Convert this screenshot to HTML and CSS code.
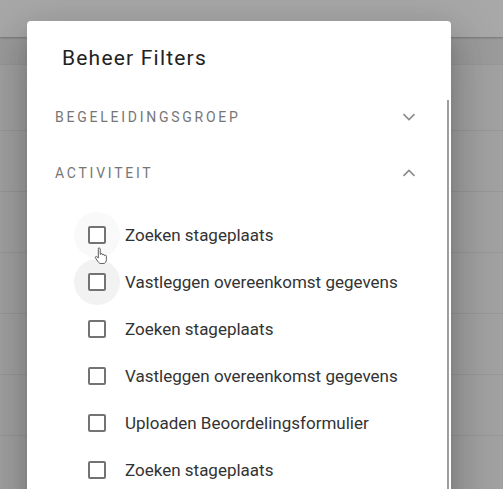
FILE: index.html
```html
<!DOCTYPE html>
<html lang="nl">
<head>
<meta charset="utf-8">
<title>Beheer Filters</title>
<link rel="stylesheet" href="styles.css">
</head>
<body>
<div class="page">
  <div class="toolbar"></div>
  <div class="subbar"></div>
  <div class="row row-first"></div>
  <div class="row"></div>
  <div class="row"></div>
  <div class="row"></div>
  <div class="row"></div>
  <div class="row"></div>
  <div class="row"></div>
</div>

<div class="dialog">
  <h2 class="title">Beheer Filters</h2>

  <div class="panel">
    <div class="panel-header">
      <span class="panel-title">BEGELEIDINGSGROEP</span>
      <svg class="chevron" width="14" height="8" viewBox="0 0 14 8"><path d="M1.5 1.2 L7 6.5 L12.5 1.2" fill="none" stroke="#8d8d8d" stroke-width="1.7"/></svg>
    </div>
  </div>

  <div class="panel expanded">
    <div class="panel-header panel-header-open">
      <span class="panel-title">ACTIVITEIT</span>
      <svg class="chevron" width="14" height="8" viewBox="0 0 14 8"><path d="M1.5 6.8 L7 1.5 L12.5 6.8" fill="none" stroke="#8d8d8d" stroke-width="1.7"/></svg>
    </div>
    <div class="panel-body">
      <label class="option"><span class="box"><span class="ripple ripple-faint"></span><span class="square"></span></span><span class="label">Zoeken stageplaats</span></label>
      <label class="option"><span class="box"><span class="ripple"></span><span class="square"></span></span><span class="label">Vastleggen overeenkomst gegevens</span></label>
      <label class="option"><span class="box"><span class="square"></span></span><span class="label">Zoeken stageplaats</span></label>
      <label class="option"><span class="box"><span class="square"></span></span><span class="label">Vastleggen overeenkomst gegevens</span></label>
      <label class="option"><span class="box"><span class="square"></span></span><span class="label">Uploaden Beoordelingsformulier</span></label>
      <label class="option"><span class="box"><span class="square"></span></span><span class="label">Zoeken stageplaats</span></label>
    </div>
  </div>

  <div class="scrollbar"></div>

  <svg class="cursor" width="15" height="18" viewBox="0 0 14 17">
    <path d="M4 1.2 C4.8 0.6 5.8 1 5.8 2 L5.8 7 L6.3 7 C6.3 6 7.9 6 7.9 7 L7.9 7.6 C8.1 6.8 9.7 6.8 9.7 7.8 L9.7 8.3 C10 7.6 11.6 7.6 11.6 8.6 L11.6 12 C11.6 14 10.5 15.6 8.5 15.6 L6.6 15.6 C5.2 15.6 4.4 14.9 3.6 13.7 L1.3 10.3 C0.8 9.5 1.6 8.6 2.4 9.1 L4 10.4 L4 2.2 Z" fill="#ffffff" stroke="#555555" stroke-width="0.9" stroke-linejoin="round"/>
  </svg>
</div>
</body>
</html>
```

FILE: styles.css
```css
* { box-sizing: border-box; }

html, body {
  margin: 0;
  padding: 0;
  width: 503px;
  height: 489px;
  overflow: hidden;
}

body {
  background: #a1a1a1;
  font-family: Roboto, "Noto Sans", "Liberation Sans", sans-serif;
  position: relative;
}

.page {
  display: flex;
  flex-direction: column;
}

.toolbar {
  height: 37px;
  background: #a8a8a8;
  box-shadow: 0 1px 2px rgba(0, 0, 0, 0.25);
  position: relative;
  z-index: 1;
}

.subbar {
  height: 28px;
  background: #9b9b9b;
  border-bottom: 1px solid #979797;
}

.row {
  height: 61px;
  background: #a1a1a1;
  border-bottom: 1px solid #979797;
}

.row-first {
  height: 66px;
}

.dialog {
  position: absolute;
  left: 27px;
  top: 21px;
  width: 424px;
  height: 500px;
  background: #ffffff;
  border-radius: 4px;
  padding-top: 21px;
  box-shadow: 0 11px 15px -7px rgba(0, 0, 0, 0.2),
              0 24px 38px 3px rgba(0, 0, 0, 0.14),
              0 9px 46px 8px rgba(0, 0, 0, 0.12);
  overflow: hidden;
  z-index: 2;
}

.title {
  margin: 0 0 19px 35px;
  font-size: 21px;
  line-height: 32px;
  font-weight: 400;
  letter-spacing: 1.2px;
  color: #222222;
}

.panel-header {
  height: 48px;
  display: flex;
  align-items: center;
  justify-content: space-between;
  padding: 0 35px 0 28px;
}

.panel-header-open {
  height: 64px;
}

.panel-title {
  font-size: 14px;
  line-height: 20px;
  letter-spacing: 2.75px;
  color: #767676;
}

.chevron {
  display: block;
}

.panel-body {
  padding-top: 6px;
}

.option {
  height: 47px;
  display: flex;
  align-items: center;
  padding-left: 61px;
}

.box {
  position: relative;
  width: 18px;
  height: 18px;
  margin-right: 19px;
  flex: none;
}

.square {
  position: absolute;
  inset: 0;
  border: 2px solid #737373;
  border-radius: 2px;
  background: #ffffff;
}

.ripple {
  position: absolute;
  left: -14px;
  top: -14px;
  width: 46px;
  height: 46px;
  border-radius: 50%;
  background: #f2f2f2;
}

.ripple-faint {
  background: #f9f9f9;
}

.label {
  font-size: 17px;
  line-height: 20px;
  color: #333333;
}

.scrollbar {
  position: absolute;
  left: 420px;
  top: 79px;
  width: 2px;
  bottom: 0;
  background: #9e9e9e;
}

.cursor {
  position: absolute;
  left: 67px;
  top: 226px;
}
```
